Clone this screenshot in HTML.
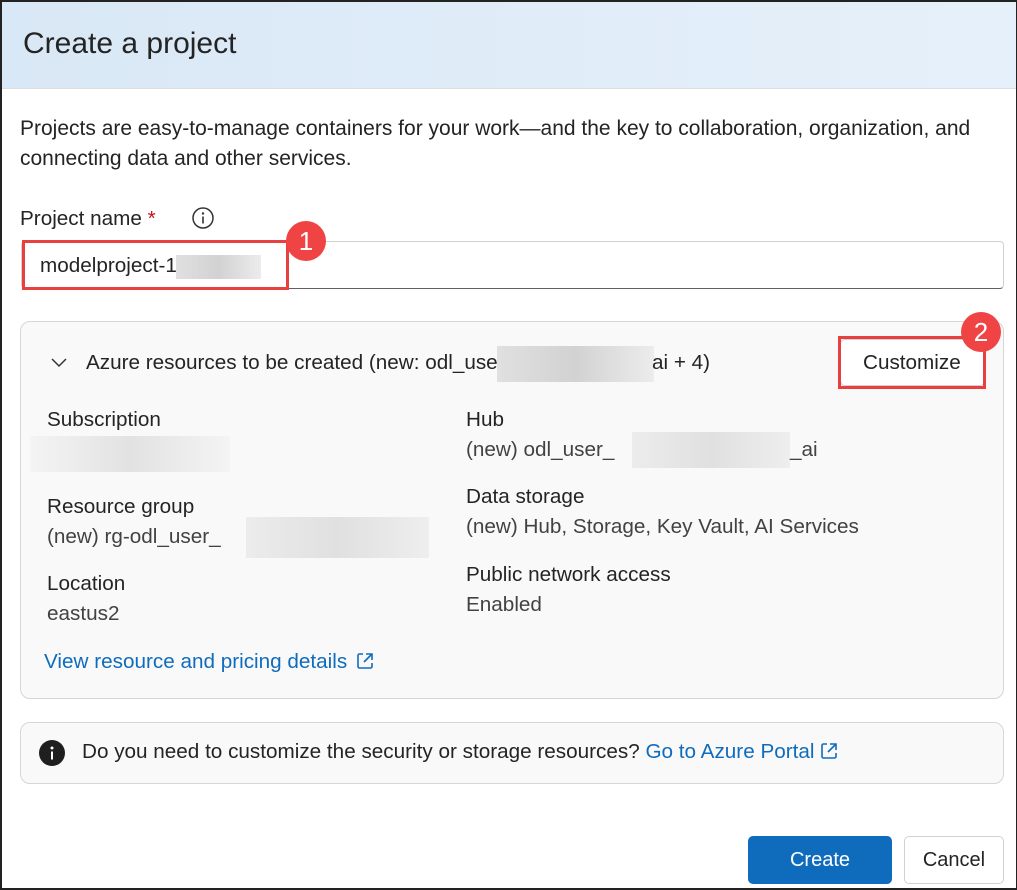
<!DOCTYPE html>
<html><head><style>
*{margin:0;padding:0;box-sizing:border-box}
body{width:1017px;height:890px;overflow:hidden;background:#fff;font-family:"Liberation Sans",sans-serif;color:#242424;position:relative}
.a{position:absolute;white-space:nowrap}
.frame{position:absolute;left:0;top:0;width:1017px;height:890px;border:2px solid #222;border-right-width:1px;pointer-events:none}
.hdr{position:absolute;left:0;top:0;width:1017px;height:89px;background:linear-gradient(90deg,#d9e8f6,#e6f0fa);border-bottom:1px solid #ddd}
.t{font-size:20.7px}
.blur{position:absolute;background:linear-gradient(90deg,#e0e0e0,#d2d2d2,#ececec)}
.link{color:#0f6cbd}
.red{position:absolute;border:3px solid #e8403f}
.badge{position:absolute;width:40px;height:40px;border-radius:50%;background:#f04444;color:#fff;font-size:26px;text-align:center;line-height:40px}
.ext{display:inline-block;vertical-align:-3px;margin-left:8px}
</style></head><body>
<div class="hdr"></div>
<div class="a" style="left:23px;top:27px;font-size:30px;color:#242424">Create a project</div>
<div class="a" style="left:20px;top:114px;line-height:30px;font-size:21px">Projects are easy-to-manage containers for your work—and the key to collaboration, organization, and<br>connecting data and other services.</div>
<div class="a t" style="left:20px;top:207px">Project name <span style="color:#c50f1f">*</span></div>
<svg class="a" style="left:191px;top:206px" width="24" height="24" viewBox="0 0 24 24"><circle cx="12" cy="12" r="10" fill="none" stroke="#333" stroke-width="1.5"/><circle cx="12" cy="7.5" r="1.2" fill="#333"/><path d="M12 10.5v7" stroke="#333" stroke-width="1.6"/></svg>
<div class="a" style="left:21px;top:241px;width:983px;height:48px;border:1px solid #d1d1d1;border-bottom:1px solid #616161;border-radius:4px"></div>
<div class="a t" style="left:40px;top:254px">modelproject-1</div>
<div class="blur" style="left:176px;top:255px;width:85px;height:24px"></div>
<div class="red" style="left:22px;top:240px;width:267px;height:50px"></div>
<div class="badge" style="left:286px;top:221px">1</div>

<div class="a" style="left:20px;top:321px;width:984px;height:378px;background:#f9f9f9;border:1px solid #d6d6d6;border-radius:10px"></div>
<svg class="a" style="left:50px;top:356px" width="18" height="14" viewBox="0 0 18 14"><path d="M2 3l7 7 7-7" fill="none" stroke="#333" stroke-width="1.5"/></svg>
<div class="a t" style="left:86px;top:351px">Azure resources to be created (new: odl_user</div>
<div class="blur" style="left:497px;top:346px;width:157px;height:36px"></div>
<div class="a t" style="left:652px;top:351px">ai + 4)</div>
<div class="a" style="left:840px;top:339px;width:145px;height:47px;background:#fff;border:1px solid #d1d1d1;border-radius:5px"></div>
<div class="a t" style="left:863px;top:351px">Customize</div>
<div class="red" style="left:838px;top:336px;width:148px;height:53px"></div>
<div class="badge" style="left:961px;top:312px">2</div>

<div class="a t" style="left:47px;top:408px">Subscription</div>
<div class="blur" style="left:30px;top:436px;width:200px;height:36px;background:linear-gradient(90deg,#f4f4f4,#e2e2e2,#f4f4f4)"></div>
<div class="a t" style="left:47px;top:495px">Resource group</div>
<div class="a t" style="left:47px;top:525px;color:#424242">(new) rg-odl_user_</div>
<div class="blur" style="left:246px;top:517px;width:183px;height:41px;background:linear-gradient(90deg,#ececec,#e0e0e0,#eeeeee)"></div>
<div class="a t" style="left:47px;top:572px">Location</div>
<div class="a t" style="left:47px;top:602px;color:#424242">eastus2</div>
<div class="a t link" style="left:44px;top:650px">View resource and pricing details<svg class="ext" width="20" height="20" viewBox="0 0 20 20"><path d="M8 3H4.5A1.5 1.5 0 0 0 3 4.5v11A1.5 1.5 0 0 0 4.5 17h11a1.5 1.5 0 0 0 1.5-1.5V12M11 3h6v6M17 3l-8 8" fill="none" stroke="#0f6cbd" stroke-width="1.6"/></svg></div>

<div class="a t" style="left:466px;top:408px">Hub</div>
<div class="a t" style="left:466px;top:438px;color:#424242">(new) odl_user_</div>
<div class="blur" style="left:632px;top:432px;width:158px;height:36px;background:linear-gradient(90deg,#ececec,#e0e0e0,#eeeeee)"></div>
<div class="a t" style="left:790px;top:438px;color:#424242">_ai</div>
<div class="a t" style="left:466px;top:485px">Data storage</div>
<div class="a t" style="left:466px;top:515px;color:#424242">(new) Hub, Storage, Key Vault, AI Services</div>
<div class="a t" style="left:466px;top:563px">Public network access</div>
<div class="a t" style="left:466px;top:593px;color:#424242">Enabled</div>

<div class="a" style="left:20px;top:722px;width:984px;height:62px;background:#f9f9f9;border:1px solid #d6d6d6;border-radius:10px"></div>
<svg class="a" style="left:38px;top:739px" width="28" height="28" viewBox="0 0 28 28"><circle cx="14" cy="14" r="13" fill="#1f1f1f"/><circle cx="14" cy="9" r="1.5" fill="#fff"/><path d="M14 12.5v8" stroke="#fff" stroke-width="2"/></svg>
<div class="a t" style="left:82px;top:740px">Do you need to customize the security or storage resources? <span class="link">Go to Azure Portal</span><svg class="ext" style="margin-left:4px" width="20" height="20" viewBox="0 0 20 20"><path d="M8 3H4.5A1.5 1.5 0 0 0 3 4.5v11A1.5 1.5 0 0 0 4.5 17h11a1.5 1.5 0 0 0 1.5-1.5V12M11 3h6v6M17 3l-8 8" fill="none" stroke="#0f6cbd" stroke-width="1.6"/></svg></div>

<div class="a" style="left:748px;top:836px;width:144px;height:48px;background:#0f6cbd;border-radius:5px;color:#fff;font-size:20px;text-align:center;line-height:48px">Create</div>
<div class="a" style="left:904px;top:836px;width:100px;height:48px;background:#fff;border:1px solid #d1d1d1;border-radius:5px;font-size:20px;text-align:center;line-height:46px">Cancel</div>
<div class="frame"></div>
</body></html>
